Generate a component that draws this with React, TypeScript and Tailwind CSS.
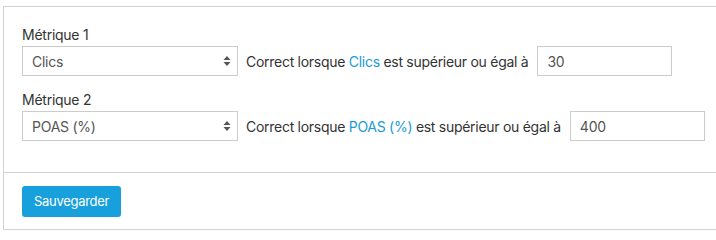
import React from "react";

function Arrows() {
  return (
    <svg width="8" height="12" viewBox="0 0 8 12" className="shrink-0">
      <path d="M4 1 L7.5 5 L0.5 5 Z" fill="#555" />
      <path d="M4 11 L7.5 7 L0.5 7 Z" fill="#555" />
    </svg>
  );
}

function Row({
  label,
  metric,
  value,
  mt,
}: {
  label: string;
  metric: string;
  value: string;
  mt: string;
}) {
  return (
    <div className={mt}>
      <div className="text-[14px] leading-[20px] tracking-[-0.25px] text-[#333]">{label}</div>
      <div className="mt-px flex items-center">
        <div className="flex h-[30px] w-[216px] items-center justify-between border border-[#ccc] bg-white pl-[9px] pr-[6px] text-[14px] tracking-[-0.25px] text-[#555]">
          <span>{metric}</span>
          <Arrows />
        </div>
        <span className="ml-2 text-[14px] tracking-[-0.28px] text-[#333]">
          Correct lorsque <span className="text-[#1a9ad6]">{metric}</span> est supérieur ou égal à
        </span>
        <div className="ml-[9px] flex h-[30px] w-[135px] items-center border border-[#ccc] bg-white pl-[9px] text-[14px] tracking-[-0.25px] text-[#555]">
          {value}
        </div>
      </div>
    </div>
  );
}

export default function App() {
  return (
    <div className="h-[236px] w-[716px] overflow-hidden bg-white font-['Inter',sans-serif]">
      <div className="ml-[3px] mt-[6px] w-[760px] border border-[#d2d2d2]">
        <div className="pl-[18px] pt-[18px] pb-[31px]">
          <Row label="Métrique 1" metric="Clics" value="30" mt="" />
          <Row label="Métrique 2" metric="POAS (%)" value="400" mt="mt-[14px]" />
        </div>
        <div className="border-t border-[#d2d2d2] pl-[18px] pt-[13px] pb-[12px]">
          <button className="h-[31px] rounded-[3px] bg-[#17a0db] px-[12px] text-[13px] tracking-[-0.3px] text-white">
            Sauvegarder
          </button>
        </div>
      </div>
    </div>
  );
}
